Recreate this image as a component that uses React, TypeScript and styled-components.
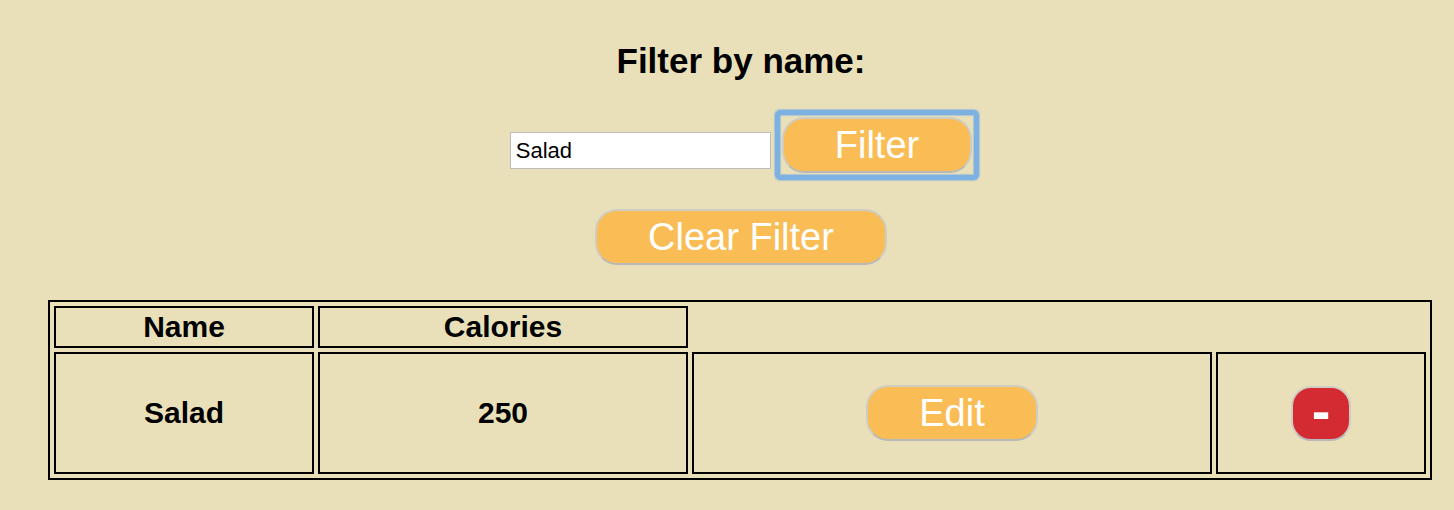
import React from "react";
import styled, { createGlobalStyle } from "styled-components";

const GlobalStyle = createGlobalStyle`
  html, body {
    margin: 0;
    padding: 0;
    background: #e9e0ba;
  }
  body {
    font-family: "Liberation Sans", Arial, sans-serif;
    color: #000;
  }
`;

const Page = styled.div`
  display: flex;
  flex-direction: column;
  align-items: center;
  padding: 41px 20px 30px 48px;
  min-height: 510px;
  box-sizing: border-box;
`;

const Title = styled.h2`
  margin: 0;
  font-size: 35px;
  font-weight: 700;
  line-height: 40px;
`;

const FilterRow = styled.div`
  display: flex;
  align-items: flex-start;
  gap: 11px;
  margin-top: 36px;
`;

const NameInput = styled.input`
  box-sizing: border-box;
  width: 261px;
  height: 37px;
  margin-top: 15px;
  padding: 0 5px;
  border: 1px solid #bdbdbd;
  background: #fff;
  font-family: "Liberation Sans", Arial, sans-serif;
  font-size: 22px;
  color: #000;
  outline: none;
`;

const PillButton = styled.button<{ $variant?: "primary" | "danger"; $focused?: boolean }>`
  position: relative;
  box-sizing: border-box;
  height: ${(p) => (p.$variant === "danger" ? "55px" : "56px")};
  padding: ${(p) => (p.$variant === "danger" ? "0 0 5px" : "0 51px")};
  width: ${(p) => (p.$variant === "danger" ? "60px" : "auto")};
  border: 2px solid #cfccc2;
  border-bottom-color: #b9b9b9;
  border-radius: ${(p) => (p.$variant === "danger" ? "20px" : "22px")};
  background: ${(p) => (p.$variant === "danger" ? "#d42a31" : "#fabd56")};
  color: #fff;
  font-family: "Liberation Sans", Arial, sans-serif;
  font-size: ${(p) => (p.$variant === "danger" ? "56px" : "38px")};
  font-weight: ${(p) => (p.$variant === "danger" ? 700 : 400)};
  line-height: 1;
  display: inline-flex;
  align-items: center;
  justify-content: center;
  cursor: pointer;
  outline: none;

  ${(p) =>
    p.$focused &&
    `
    &::after {
      content: "";
      position: absolute;
      inset: -9px;
      border: 5px solid #7db1e2;
      border-radius: 5px;
      box-shadow: 0 0 1px 1px rgba(125, 177, 226, 0.55),
        inset 0 0 1px 1px rgba(125, 177, 226, 0.55);
      pointer-events: none;
    }
  `}
`;

const ClearButton = styled(PillButton)`
  margin-top: 36px;
`;

const FoodTable = styled.table`
  align-self: flex-start;
  margin-top: 35px;
  width: 1384px;
  table-layout: fixed;
  border-collapse: separate;
  border-spacing: 4px;
  border: 2px solid #000;
`;

const HeadCell = styled.th`
  box-sizing: border-box;
  height: 42px;
  padding: 0;
  border: 2px solid #000;
  font-size: 30px;
  font-weight: 700;
  text-align: center;
  vertical-align: middle;
`;

const BodyCell = styled.td`
  box-sizing: border-box;
  height: 122px;
  padding: 0;
  border: 2px solid #000;
  font-size: 30px;
  font-weight: 700;
  text-align: center;
  vertical-align: middle;
`;

const foods = [{ name: "Salad", calories: 250 }];

export default function App() {
  return (
    <>
      <GlobalStyle />
      <Page>
        <Title>Filter by name:</Title>
        <FilterRow>
          <NameInput defaultValue="Salad" />
          <PillButton $focused>Filter</PillButton>
        </FilterRow>
        <ClearButton>Clear Filter</ClearButton>
        <FoodTable>
          <colgroup>
            <col style={{ width: 260 }} />
            <col style={{ width: 370 }} />
            <col style={{ width: 520 }} />
            <col style={{ width: 210 }} />
          </colgroup>
          <thead>
            <tr>
              <HeadCell>Name</HeadCell>
              <HeadCell>Calories</HeadCell>
            </tr>
          </thead>
          <tbody>
            {foods.map((f) => (
              <tr key={f.name}>
                <BodyCell>{f.name}</BodyCell>
                <BodyCell>{f.calories}</BodyCell>
                <BodyCell>
                  <PillButton>Edit</PillButton>
                </BodyCell>
                <BodyCell>
                  <PillButton $variant="danger">-</PillButton>
                </BodyCell>
              </tr>
            ))}
          </tbody>
        </FoodTable>
      </Page>
    </>
  );
}
